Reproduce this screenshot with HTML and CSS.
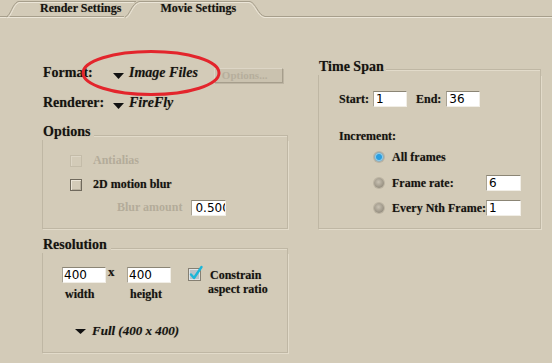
FILE: index.html
```html
<!DOCTYPE html>
<html>
<head>
<meta charset="utf-8">
<link rel="stylesheet" href="styles.css">
</head>
<body>
<div class="tabbar">
  <svg class="tabshape" width="552" height="20" viewBox="0 0 552 20">
    <g fill="none" stroke-width="1">
      <path d="M0 16.5 H124" stroke="#a79f8c"/>
      <path d="M0 17.5 H124" stroke="#ece6d8"/>
      <path d="M6 17 C11 15 12 4 18 1.5 H136" stroke="#a79f8c"/>
      <path d="M7 18 C12 16 13 5 19 2.5 H134" stroke="#ece6d8"/>
      <path d="M125 17 C130 15 131 4 139 1.5 H250 C256 3 258 15 265 16.5 H552" stroke="#a79f8c"/>
      <path d="M126 18 C131 16 132 5 140 2.5 H249 C255 4 257 16 264 17.5 H552" stroke="#ece6d8"/>
    </g>
  </svg>
  <span class="tab tab-render">Render Settings</span>
  <span class="tab tab-movie">Movie Settings</span>
</div>

<div class="main">
  <div class="col-left">
    <div class="row">
      <span class="row-label">Format:</span>
      <svg class="tri" width="11" height="6" viewBox="0 0 11 6"><path d="M0 0H11L5.5 6Z" fill="#111"/></svg>
      <span class="row-value">Image Files</span>
      <span class="btn">Options...</span>
    </div>
    <div class="row">
      <span class="row-label">Renderer:</span>
      <svg class="tri" width="11" height="6" viewBox="0 0 11 6"><path d="M0 0H11L5.5 6Z" fill="#111"/></svg>
      <span class="row-value">FireFly</span>
    </div>

    <div class="group group-options">
      <div class="group-head">
        <span class="group-title">Options</span>
        <span class="group-rule"></span>
      </div>
      <div class="group-body options-body">
        <div class="check-row">
          <span class="cb cb-disabled"></span>
          <span class="muted">Antialias</span>
        </div>
        <div class="check-row r2">
          <span class="cb"></span>
          <span>2D motion blur</span>
        </div>
        <div class="check-row r3">
          <span class="muted">Blur amount</span>
          <span class="field blur-field">0.500</span>
        </div>
      </div>
    </div>

    <div class="group group-res">
      <div class="group-head">
        <span class="group-title">Resolution</span>
        <span class="group-rule"></span>
      </div>
      <div class="group-body res-body">
        <div class="res-row">
          <div class="dim">
            <span class="field dim-field">400</span>
            <span class="dim-label">width</span>
          </div>
          <span class="times">x</span>
          <div class="dim">
            <span class="field dim-field">400</span>
            <span class="dim-label">height</span>
          </div>
          <svg class="cb-checked" width="15" height="16" viewBox="0 0 15 16">
            <rect x="0.5" y="2.5" width="12" height="12" fill="#b9c3c8" stroke="#857f72"/>
            <rect x="1.5" y="3.5" width="10" height="10" fill="none" stroke="#dfe5e8"/>
            <path d="M3 8.5 L6 12 L13.5 1" fill="none" stroke="#1bb6d8" stroke-width="2.4" stroke-linecap="round" stroke-linejoin="round"/>
          </svg>
          <div class="constrain">
            <span class="c1">Constrain</span>
            <span>aspect ratio</span>
          </div>
        </div>
        <div class="full-row">
          <svg class="tri tri-full" width="11" height="5" viewBox="0 0 11 5"><path d="M0 0H11L5.5 5Z" fill="#111"/></svg>
          <span>Full (400 x 400)</span>
        </div>
      </div>
    </div>
  </div>

  <div class="col-right">
    <div class="group">
      <div class="group-head">
        <span class="group-title">Time Span</span>
        <span class="group-rule ts-rule"></span>
      </div>
      <div class="group-body ts-body">
        <div class="ts-row">
          <span>Start:</span>
          <span class="field ts-field start-field">1</span>
          <span class="end-label">End:</span>
          <span class="field ts-field end-field">36</span>
        </div>
        <div class="inc">Increment:</div>
        <div class="radio-row rr1">
          <span class="radio radio-on"></span>
          <span class="rlabel">All frames</span>
        </div>
        <div class="radio-row rr2">
          <span class="radio"></span>
          <span class="rlabel">Frame rate:</span>
          <span class="field r-field">6</span>
        </div>
        <div class="radio-row rr3">
          <span class="radio"></span>
          <span class="rlabel">Every Nth Frame:</span>
          <span class="field r-field">1</span>
        </div>
      </div>
    </div>
  </div>
</div>

<svg class="annot" width="552" height="363" viewBox="0 0 552 363">
  <ellipse cx="151" cy="73" rx="68" ry="21.5" fill="none" stroke="#e3252c" stroke-width="3"/>
</svg>
</body>
</html>
```

FILE: styles.css
```css
html, body {
  margin: 0;
  padding: 0;
}
body {
  background: #d3cbb8;
  font-family: "Liberation Serif", "Times New Roman", serif;
  color: #151310;
  width: 552px;
  height: 363px;
  overflow: hidden;
  position: relative;
  text-shadow: 0 0 1px rgba(20, 18, 14, 0.35);
}

.tabbar {
  position: relative;
  height: 19px;
  display: flex;
  font-weight: bold;
  font-size: 12px;
  line-height: 14px;
}
.tabshape {
  position: absolute;
  left: 0;
  top: 0;
}
.tab {
  position: relative;
  padding-top: 1px;
}
.tab-render { margin-left: 40px; }
.tab-movie { margin-left: 39px; }

.main {
  display: flex;
  align-items: flex-start;
  gap: 30px;
  padding: 40px 0 0 42px;
}
.col-left {
  width: 246px;
  padding-top: 5px;
}
.col-right {
  width: 223px;
}

.row {
  display: flex;
  align-items: flex-start;
  height: 18px;
  padding-left: 1px;
  font-weight: bold;
  font-size: 14px;
  line-height: 18px;
}
.row + .row { margin-top: 12px; }
.row-label { width: 70px; }
.tri {
  display: block;
  flex-shrink: 0;
  margin-top: 9px;
  margin-right: 5px;
}
.row-value { font-style: italic; }
.btn {
  margin-left: 16px;
  margin-top: 4px;
  width: 69px;
  height: 15px;
  box-sizing: border-box;
  background: #cac2af;
  border: 1px solid;
  border-color: #ddd6c6 #a69e8c #a69e8c #ddd6c6;
  box-shadow: 1px 1px 0 #bdb5a3;
  font-size: 11px;
  line-height: 13px;
  color: #b6ae9c;
  padding-left: 7px;
  text-shadow: none;
}

.group-options { margin-top: 12px; }
.group-res { margin-top: 8px; }
.group-head {
  display: flex;
  height: 16px;
  font-weight: bold;
  font-size: 14px;
  line-height: 16px;
}
.group-title { padding-left: 1px; }
.group-rule {
  flex: 1;
  margin-left: 4px;
  margin-top: 11px;
  border-top: 1px solid #bfb7a4;
  border-right: 1px solid #bfb7a4;
  box-shadow: inset 0 1px 0 #e2dbca;
}
.ts-rule {
  margin-left: 2px;
  margin-top: 10px;
}
.group-body {
  border: 1px solid #bfb7a4;
  border-top: none;
  box-shadow: 1px 1px 0 #e2dbca;
}

.options-body { padding: 13px 0 13px 27px; }
.check-row {
  display: flex;
  align-items: center;
  height: 15px;
  font-size: 12px;
  font-weight: bold;
  line-height: 15px;
}
.check-row.r2 { margin-top: 9px; }
.check-row.r3 { margin-top: 8px; padding-left: 47px; }
.cb {
  width: 12px;
  height: 12px;
  box-sizing: border-box;
  border: 1px solid #6f695c;
  box-shadow: inset 1px 1px 0 #ebe5d7, inset -1px -1px 0 #b8b09e;
  margin-right: 11px;
  flex-shrink: 0;
}
.cb-disabled {
  border-color: #c4bca9;
  box-shadow: inset 1px 1px 0 #ddd6c6;
}
.muted {
  color: #b4ac9a;
  text-shadow: none;
}

.field {
  display: block;
  background: #fff;
  height: 16px;
  box-sizing: border-box;
  border-top: 1px solid #8b8575;
  border-left: 1px solid #a8a293;
  border-right: 1px solid #f1eee6;
  border-bottom: 1px solid #f1eee6;
  font-family: "DejaVu Sans", "Verdana", sans-serif;
  font-size: 12px;
  line-height: 14px;
  padding-left: 2px;
  font-weight: normal;
  font-style: normal;
  color: #000;
  overflow: hidden;
  white-space: nowrap;
  flex-shrink: 0;
  text-shadow: none;
}
.blur-field {
  width: 35px;
  margin-left: 9px;
  padding-left: 3px;
}

.res-body { padding: 14px 0 13px 19px; }
.res-row {
  display: flex;
  align-items: flex-start;
  font-size: 12px;
  font-weight: bold;
}
.dim {
  display: flex;
  flex-direction: column;
  width: 44px;
}
.dim-field { width: 44px; padding-left: 1px; }
.dim-label {
  margin-top: 4px;
  line-height: 14px;
  padding-left: 3px;
}
.times {
  width: 21px;
  box-sizing: border-box;
  padding-left: 2px;
  line-height: 16px;
  margin-top: -3px;
  font-size: 13px;
}
.cb-checked {
  display: block;
  margin-left: 17px;
  margin-top: -1px;
  overflow: visible;
}
.constrain {
  display: flex;
  flex-direction: column;
  margin-left: 5px;
  margin-top: 1px;
  line-height: 14px;
}
.constrain .c1 { padding-left: 2px; }
.full-row {
  display: flex;
  align-items: flex-start;
  margin-top: 22px;
  padding-left: 13px;
  font-size: 13px;
  font-weight: bold;
  font-style: italic;
  line-height: 16px;
}
.tri-full {
  margin-top: 6px;
  margin-right: 6px;
}

.ts-body { padding: 16px 0 12px 20px; }
.ts-row {
  display: flex;
  align-items: center;
  height: 16px;
  font-size: 12px;
  font-weight: bold;
  line-height: 16px;
}
.ts-field { width: 34px; }
.start-field { margin-left: 4px; }
.end-label { margin-left: 9px; }
.end-field { margin-left: 5px; }
.inc {
  margin-top: 22px;
  font-size: 12px;
  font-weight: bold;
  line-height: 14px;
}
.radio-row {
  display: flex;
  align-items: center;
  padding-left: 35px;
  font-size: 12px;
  font-weight: bold;
  line-height: 16px;
  height: 16px;
}
.rr1 { margin-top: 6px; }
.rr2 { margin-top: 10px; }
.rr3 { margin-top: 9px; }
.radio {
  width: 10px;
  height: 10px;
  border-radius: 50%;
  margin-right: 8px;
  flex-shrink: 0;
  background: radial-gradient(circle at 45% 40%, #c9c2b3 0, #a29b8c 55%, #7c766a 100%);
  box-shadow: 0 0 0 1px #bcb4a2;
}
.radio-on {
  background: radial-gradient(circle at 50% 50%, #2a9ee0 0, #2a9ee0 2.5px, #8ccbe8 3.5px, #8f9ea5 5px);
}
.rlabel {
  width: 94px;
  white-space: nowrap;
  flex-shrink: 0;
}
.r-field { width: 35px; }

.annot {
  position: absolute;
  left: 0;
  top: 0;
  pointer-events: none;
}
```
